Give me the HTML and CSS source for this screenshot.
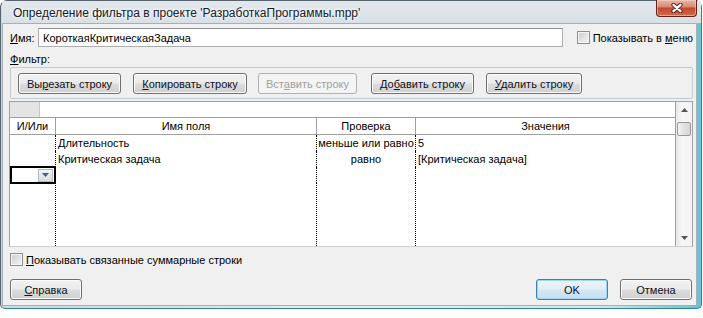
FILE: index.html
```html
<!DOCTYPE html>
<html lang="ru">

<head>
    <meta charset="UTF-8">
    <meta name="viewport" content="width=device-width, initial-scale=1.0">
    <title>Определение фильтра</title>
    <link rel="stylesheet" href="styles.css">
</head>

<body>

    <div class="window">
        <div class="titlebar">
            <span class="title">Определение фильтра в проекте 'РазработкаПрограммы.mpp'</span>
            <button class="close-btn" title="Закрыть">
                <svg width="14" height="10" viewBox="0 0 14 10">
                    <path d="M3.5 1.8 L10.5 8.2 M10.5 1.8 L3.5 8.2" stroke="#4b1a12" stroke-width="4.2" stroke-linecap="round" />
                    <path d="M3.5 1.8 L10.5 8.2 M10.5 1.8 L3.5 8.2" stroke="#ffffff" stroke-width="2.4" stroke-linecap="round" />
                </svg>
            </button>
        </div>

        <div class="client">
            <div class="name-row">
                <label class="name-label" for="filter-name"><u>И</u>мя:</label>
                <input type="text" id="filter-name" value="КороткаяКритическаяЗадача">
                <label class="check check-menu"><span class="box"></span><span>Показывать в <u>м</u>еню</span></label>
            </div>

            <div class="filter-label"><u>Ф</u>ильтр:</div>

            <div class="toolbar">
                <button class="btn btn-cut">Вы<u>р</u>езать строку</button>
                <button class="btn btn-copy"><u>К</u>опировать строку</button>
                <button class="btn btn-paste" disabled>Вст<u>а</u>вить строку</button>
                <button class="btn btn-add">До<u>б</u>авить строку</button>
                <button class="btn btn-delete"><u>У</u>далить строку</button>
            </div>

            <div class="grid">
                <div class="grid-main">
                    <div class="editbar">
                        <div class="corner"></div>
                        <div class="editfield"></div>
                    </div>
                    <div class="cols header">
                        <div>И/Или</div>
                        <div>Имя поля</div>
                        <div>Проверка</div>
                        <div>Значения</div>
                    </div>
                    <div class="cols rows">
                        <div></div>
                        <div class="left">Длительность</div>
                        <div>меньше или равно</div>
                        <div class="left">5</div>

                        <div></div>
                        <div class="left">Критическая задача</div>
                        <div>равно</div>
                        <div class="left">[Критическая задача]</div>

                        <div class="selected"><span class="drop"><svg width="7" height="4" viewBox="0 0 7 4"><path d="M0 0 H7 L3.5 4 Z" fill="#4e5d78" /></svg></span></div>
                        <div></div>
                        <div></div>
                        <div></div>

                        <div></div>
                        <div></div>
                        <div></div>
                        <div></div>
                    </div>
                </div>
                <div class="scrollbar">
                    <div class="arrow"><svg width="7" height="4" viewBox="0 0 7 4"><path d="M0 4 H7 L3.5 0 Z" fill="#555" /></svg></div>
                    <div class="thumb"></div>
                    <div class="track"></div>
                    <div class="arrow"><svg width="7" height="4" viewBox="0 0 7 4"><path d="M0 0 H7 L3.5 4 Z" fill="#555" /></svg></div>
                </div>
            </div>

            <label class="check check-summary"><span class="box"></span><span><u>П</u>оказывать связанные суммарные строки</span></label>

            <div class="footer">
                <button class="btn btn-help"><u>С</u>правка</button>
                <div class="spacer"></div>
                <button class="btn btn-ok">OK</button>
                <button class="btn btn-cancel">Отмена</button>
            </div>
        </div>
    </div>

</body>

</html>
```

FILE: styles.css
```css
body {
    margin: 0;
    background: #ffffff;
    font-family: 'Liberation Sans', Arial, sans-serif;
    font-size: 11px;
    color: #000;
}

u {
    text-decoration: underline;
    text-underline-offset: 1px;
}

.window {
    width: 702px;
    box-sizing: border-box;
    display: flex;
    flex-direction: column;
    padding: 0 4px 2px 1px;
    border: 1px solid #56646e;
    border-right-color: #2f8797;
    border-bottom-color: #2f8797;
    border-radius: 7px 7px 5px 5px;
    background: linear-gradient(to right, #cfd7dc 0%, #e3e9ec 45%, #d9e8ec 85%, #6cc0cc 100%);
}

.titlebar {
    height: 22px;
    display: flex;
    align-items: flex-start;
    background: linear-gradient(#e2e8ec, #d9e0e5);
    margin-right: -4px;
    padding-right: 4px;
}

.title {
    flex: 1;
    padding: 5px 0 0 11px;
    font-size: 12px;
    color: #16202a;
    text-shadow: 0 0 5px #ffffff, 0 0 3px #ffffff;
    white-space: nowrap;
}

.close-btn {
    width: 41px;
    height: 17px;
    margin-top: -1px;
    padding: 0;
    display: flex;
    align-items: center;
    justify-content: center;
    border: 1px solid #5e2418;
    border-top: none;
    border-radius: 0 0 4px 4px;
    background: linear-gradient(#eab4a6 0%, #d98f7b 40%, #c4482d 52%, #cf6c50 100%);
    box-shadow: inset 0 0 0 1px rgba(255, 220, 210, 0.5);
}

.client {
    flex: 1;
    display: flex;
    flex-direction: column;
    background: #f0f0f0;
    border: 1px solid #a4b0b7;
    padding: 4px 3px 5px 7px;
}

/* name row */
.name-row {
    height: 19px;
    display: flex;
    align-items: center;
}

.name-label {
    width: 28px;
}

.name-row input {
    width: 525px;
    height: 19px;
    box-sizing: border-box;
    margin: 0;
    padding: 0 0 0 4px;
    border: 1px solid #abadb3;
    border-top-color: #8e9095;
    font-family: inherit;
    font-size: 11px;
    color: #000;
    background: #fff;
}

.check {
    display: flex;
    align-items: center;
    white-space: nowrap;
}

.check-menu {
    margin-left: 14px;
}

.box {
    width: 11px;
    height: 11px;
    margin-right: 3px;
    border: 1px solid #8e8f8f;
    box-shadow: inset 0 0 0 1px #f4f4f4;
    background: linear-gradient(135deg, #c9cdd1, #f6f6f6);
}

.filter-label {
    margin-top: 6px;
    line-height: 13px;
}

/* toolbar group */
.toolbar {
    margin-top: 1px;
    display: flex;
    align-items: flex-start;
    padding: 5px 0 0 7px;
    box-sizing: border-box;
    height: 32px;
    border: 1px solid #c3cbd1;
    border-radius: 2px;
}

.btn {
    height: 21px;
    padding: 0;
    font-family: inherit;
    font-size: 11px;
    color: #101020;
    border: 1px solid #707070;
    border-radius: 3px;
    background: linear-gradient(#f2f2f2 0%, #ebebeb 48%, #dddddd 52%, #cfcfcf 100%);
    box-shadow: inset 0 0 0 1px #fbfbfb;
}

.btn:disabled {
    color: #a0a0a0;
    border-color: #adb2b5;
    background: #f4f4f4;
    box-shadow: none;
}

.btn-cut {
    width: 103px;
}

.btn-copy {
    width: 114px;
    margin-left: 12px;
}

.btn-paste {
    width: 99px;
    margin-left: 11px;
}

.btn-add {
    width: 103px;
    margin-left: 14px;
}

.btn-delete {
    width: 96px;
    margin-left: 12px;
}

/* grid */
.grid {
    margin: 2px 0 0 -1px;
    height: 146px;
    box-sizing: border-box;
    display: flex;
    border: 1px solid #a0a0a0;
    border-bottom-color: #d0d0d0;
    background: #fff;
}

.grid-main {
    width: 667px;
    display: flex;
    flex-direction: column;
    border-right: 1px solid #a0a0a0;
    box-sizing: border-box;
}

.editbar {
    height: 16px;
    display: flex;
    box-sizing: border-box;
    border-bottom: 1px solid #a0a0a0;
}

.corner {
    width: 29px;
    background: #e4e4e4;
    border-right: 1px solid #c8c8c8;
}

.editfield {
    flex: 1;
}

.cols {
    display: grid;
    grid-template-columns: 46px 261px 99px 1fr;
}

.cols > div {
    box-sizing: border-box;
    white-space: nowrap;
    overflow: hidden;
    text-align: center;
}

.header {
    height: 17px;
    border-bottom: 1px solid #a0a0a0;
    box-sizing: border-box;
    line-height: 16px;
}

.header > div {
    border-right: 1px solid #a0a0a0;
}

.header > div:last-child {
    border-right: none;
}

.rows {
    flex: 1;
    grid-template-rows: 16px 16px 16px 1fr;
    line-height: 16px;
}

.rows > div {
    border-right: 1px dotted #000;
}

.rows > div:nth-child(4n) {
    border-right: none;
}

.rows > .left {
    text-align: left;
    padding-left: 2px;
}

.rows > .selected {
    margin: -1px 0 -1px 0;
    border: 2px solid #000;
    display: flex;
    justify-content: flex-end;
    align-items: center;
    padding-right: 1px;
}

.drop {
    width: 15px;
    height: 13px;
    display: flex;
    align-items: center;
    justify-content: center;
    box-sizing: border-box;
    border: 1px solid #b4b9be;
    background: linear-gradient(#f1f3f5, #d8dde2);
}

/* scrollbar */
.scrollbar {
    width: 16px;
    display: flex;
    flex-direction: column;
    align-items: center;
    background: linear-gradient(to right, #e8e8e8, #f7f7f7 40%, #f3f3f3);
}

.arrow {
    height: 16px;
    width: 16px;
    display: flex;
    align-items: center;
    justify-content: center;
}

.thumb {
    margin-top: 4px;
    width: 14px;
    height: 14px;
    box-sizing: border-box;
    border: 1px solid #979797;
    border-radius: 2px;
    background: linear-gradient(to right, #f3f3f3, #e2e2e2 50%, #d6d6d6);
}

.track {
    flex: 1;
}

.check-summary {
    margin-top: 6px;
    height: 13px;
}

/* footer buttons */
.footer {
    margin-top: 13px;
    display: flex;
    padding-right: 1px;
}

.spacer {
    flex: 1;
}

.btn-help,
.btn-ok,
.btn-cancel {
    width: 72px;
}

.btn-ok {
    border-color: #3c7fb1;
    background: linear-gradient(#eaf4fa 0%, #e2eff7 48%, #d3e6f2 52%, #c8def0 100%);
    box-shadow: inset 0 0 0 1px #9fd7f3;
}

.btn-cancel {
    margin-left: 12px;
}
```
